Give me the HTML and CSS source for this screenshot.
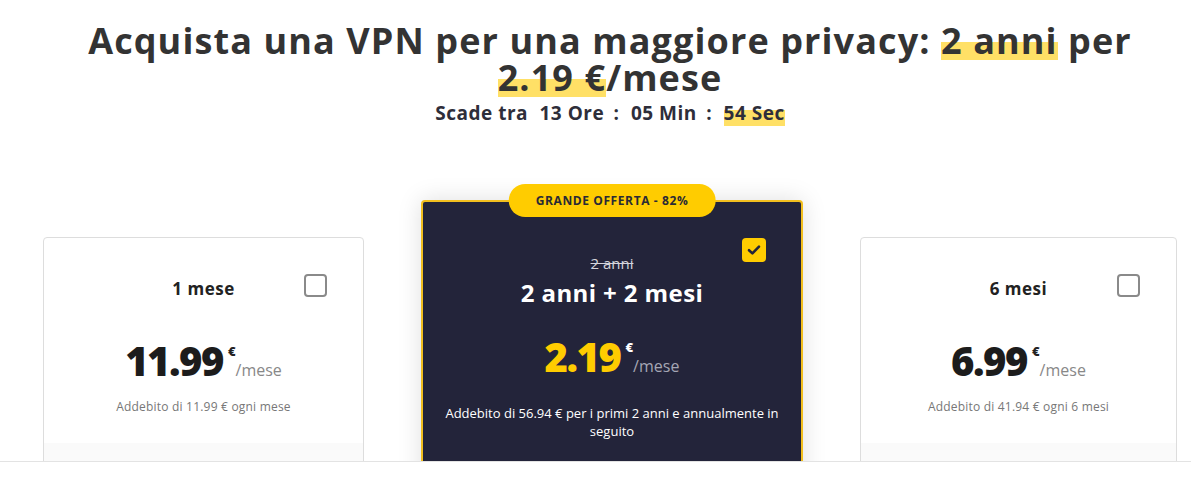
FILE: index.html
```html
<!DOCTYPE html>
<html lang="it">
<head>
  <meta charset="UTF-8" />
  <title>Acquista una VPN</title>
  <meta name="viewport" content="width=device-width, initial-scale=1.0" />
  <link rel="stylesheet" href="styles.css">
</head>
<body>

  <div class="page">
    <h1 class="headline">Acquista una VPN per una maggiore privacy: <span class="mark">2 anni</span> per<br><span class="mark">2.19 €</span>/mese</h1>
    <p class="timer">Scade tra <span class="unit">13 Ore</span> : <span class="unit">05 Min</span> : <span class="unit mark">54 Sec</span></p>

    <div class="plans">
      <div class="plan">
        <span class="check"></span>
        <h2 class="plan-title">1 mese</h2>
        <div class="price"><span class="amount">11.99</span><span class="cur">€</span><span class="per">/mese</span></div>
        <p class="billing">Addebito di 11.99 € ogni mese</p>
        <div class="plan-foot"></div>
      </div>

      <div class="plan plan-best">
        <span class="badge">GRANDE OFFERTA - 82%</span>
        <span class="check checked">
          <svg width="14" height="14" viewBox="0 0 14 14"><path d="M2 7.2 L5.4 10.4 L12 3.6" fill="none" stroke="#23243a" stroke-width="2.6" stroke-linecap="round" stroke-linejoin="round"/></svg>
        </span>
        <p class="old-term">2 anni</p>
        <h2 class="plan-title">2 anni + 2 mesi</h2>
        <div class="price"><span class="amount">2.19</span><span class="cur">€</span><span class="per">/mese</span></div>
        <p class="billing">Addebito di 56.94 € per i primi 2 anni e annualmente in seguito</p>
      </div>

      <div class="plan">
        <span class="check"></span>
        <h2 class="plan-title">6 mesi</h2>
        <div class="price"><span class="amount">6.99</span><span class="cur">€</span><span class="per">/mese</span></div>
        <p class="billing">Addebito di 41.94 € ogni 6 mesi</p>
        <div class="plan-foot"></div>
      </div>
    </div>
  </div>

  <div class="bottom-bar"></div>

</body>
</html>
```

FILE: styles.css
```css
html, body {
  margin: 0;
  padding: 0;
  background: #fff;
  font-family: 'Open Sans', sans-serif;
  color: #333;
}

.page {
  width: 1134px;
  margin-left: 43px;
}

.headline {
  margin: 0;
  padding-top: 22px;
  font-size: 36px;
  line-height: 37px;
  font-weight: 700;
  letter-spacing: 1.1px;
  text-align: center;
  color: #333;
}

.mark {
  background: linear-gradient(transparent 54%, #ffe066 54%, #ffe066 89%, transparent 89%);
}

.timer {
  margin: 5px 0 0;
  font-size: 19px;
  line-height: 24px;
  font-weight: 700;
  letter-spacing: 0.5px;
  text-align: center;
  color: #2e2e3a;
}

.timer .unit {
  margin: 0 4px 0 6px;
}

.timer .mark {
  background: linear-gradient(transparent 40%, #ffe066 40%);
  margin-right: 0;
}

/* plan cards */
.plans {
  display: grid;
  grid-template-columns: 321px 382px 317px;
  column-gap: 57px;
  align-items: start;
  margin-top: 75px;
}

.plan {
  position: relative;
  margin-top: 37px;
  border: 1px solid #ddd;
  border-radius: 4px;
  background: #fff;
  text-align: center;
  padding-top: 40px;
  color: #222;
}

.plan-title {
  margin: 0;
  font-size: 17px;
  line-height: 22px;
  font-weight: 700;
  letter-spacing: 0.5px;
}

.check {
  position: absolute;
  top: 36px;
  right: 36px;
  width: 19px;
  height: 19px;
  border: 2px solid #8a8a8a;
  border-radius: 4px;
}

.price {
  margin-top: 37px;
  line-height: 48px;
  white-space: nowrap;
}

.amount {
  font-size: 40px;
  font-weight: 800;
  letter-spacing: -1.5px;
  color: #1c1c1c;
}

.cur {
  display: inline-block;
  margin-left: 5px;
  font-size: 13px;
  line-height: 1;
  font-weight: 800;
  vertical-align: 20px;
}

.per {
  font-size: 16px;
  color: #888;
}

.billing {
  margin: 5px 0 0;
  font-size: 12px;
  line-height: 16px;
  letter-spacing: 0.2px;
  color: #777;
}

.plan-foot {
  margin-top: 28px;
  height: 60px;
  background: #fafafa;
}

/* featured plan */
.plan-best {
  margin-top: 0;
  padding: 51px 14px 60px;
  border: 2px solid #f2bf1f;
  background: #23243a;
  box-shadow: 0 0 24px rgba(0, 0, 0, 0.13);
  color: #fff;
}

.plan-best .badge {
  position: absolute;
  top: -18px;
  left: 50%;
  transform: translateX(-50%);
  height: 33px;
  padding: 0 27px;
  border-radius: 17px;
  background: #ffcc00;
  color: #2a2a35;
  font-size: 12px;
  line-height: 33px;
  font-weight: 700;
  letter-spacing: 0.6px;
  white-space: nowrap;
}

.plan-best .check {
  top: 36px;
  right: 35px;
  width: 24px;
  height: 24px;
  border: none;
  background: #ffcc00;
  display: flex;
  align-items: center;
  justify-content: center;
}

.old-term {
  margin: 0;
  font-size: 15px;
  line-height: 20px;
  color: #d4d4dc;
  text-decoration: line-through;
}

.plan-best .plan-title {
  margin-top: 6px;
  font-size: 24px;
  line-height: 28px;
  letter-spacing: 0.4px;
}

.plan-best .price {
  margin-top: 26px;
}

.plan-best .amount {
  color: #ffcc00;
}

.plan-best .cur {
  color: #fff;
}

.plan-best .per {
  color: #a5a6b4;
}

.plan-best .billing {
  margin-top: 14px;
  font-size: 13px;
  line-height: 18px;
  letter-spacing: 0;
  color: #fff;
}

.bottom-bar {
  position: fixed;
  left: 0;
  right: 0;
  bottom: 0;
  height: 17px;
  background: #fff;
  border-top: 1px solid #e3e3e3;
}
```
